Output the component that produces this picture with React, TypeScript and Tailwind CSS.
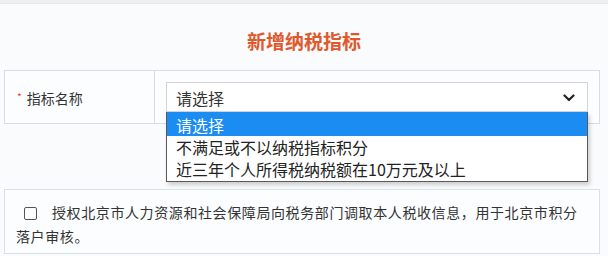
import React from "react";

export default function App() {
  const font = { fontFamily: '"Noto Sans CJK SC", "Noto Sans", sans-serif' };
  return (
    <div className="w-[608px] h-[256px] overflow-hidden bg-[#f9fbfd] text-[#333]" style={font}>
      <div className="h-[4px] bg-[#efefef] border-b border-[#e3e6ea]" />
      <div className="pt-[24px] h-[66px] text-center">
        <span className="text-[19px] font-bold leading-[26px] text-[#e0582b]">新增纳税指标</span>
      </div>
      <div className="mx-[4px] w-[596px]">
        <div className="relative flex border border-[#d6dee4] bg-[#fcfdfe]">
          <div className="w-[150px] border-r border-[#d6dee4] flex items-center pl-[12px] text-[14px] pt-[2px]">
            <span className="text-[#e04040] text-[10px] mr-[5px] -mt-[4px]">*</span>
            <span>指标名称</span>
          </div>
          <div className="flex-1 p-[11px]">
            <div className="relative h-[30px] border border-[#cfd5da] bg-white flex items-center pl-[9px] pr-[12px]">
              <span className="text-[16px] leading-none flex-1 pt-[2px]">请选择</span>
              <svg width="12" height="8" viewBox="0 0 12 8" className="mt-[1px]">
                <path d="M1.5 1.5 L6 6 L10.5 1.5" fill="none" stroke="#222" strokeWidth="2.2" strokeLinecap="round" strokeLinejoin="round" />
              </svg>
              <div className="absolute left-[-1px] right-[-1px] top-[29px] z-10 bg-white border border-[#5a5a5a] border-t-0 shadow-[2px_3px_4px_rgba(0,0,0,0.18)] text-[16px] pb-[1px]">
                <div className="h-[24px] bg-[#1a8cf2] text-white pl-[9px] flex items-center pt-[2px]">请选择</div>
                <div className="h-[22px] pl-[9px] flex items-center text-[#222]">不满足或不以纳税指标积分</div>
                <div className="h-[22px] pl-[9px] flex items-center text-[#222]">近三年个人所得税纳税额在10万元及以上</div>
              </div>
            </div>
          </div>
        </div>
        <div className="mt-[65px] h-[65px] border border-[#d6e2e6] bg-[#fcfdfe] pl-[11px] pr-[6px] pt-[10px] text-[14px] leading-[24px] tracking-[0.6px] text-[#333]">
          <span className="inline-block w-[8px]" />
          <span className="inline-block align-[-2px] w-[13px] h-[13px] border border-[#555] rounded-[2px] bg-white mr-[15px]" />
          授权北京市人力资源和社会保障局向税务部门调取本人税收信息，用于北京市积分
          <br />
          落户审核。
        </div>
      </div>
    </div>
  );
}
